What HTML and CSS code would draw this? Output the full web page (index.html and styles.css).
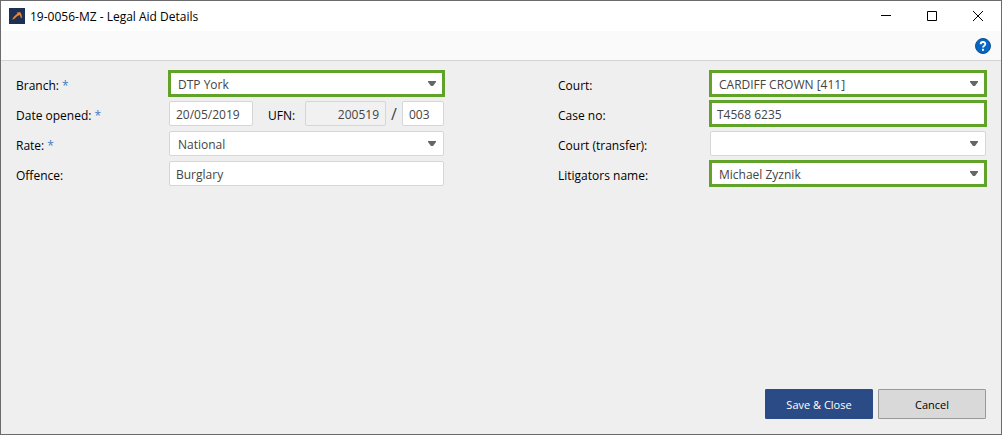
FILE: index.html
```html
<!DOCTYPE html>
<html lang="en">
<head>
<meta charset="utf-8">
<title>19-0056-MZ - Legal Aid Details</title>
<link rel="stylesheet" href="styles.css">
</head>
<body>
<div class="window">
  <header class="titlebar">
    <svg class="app-icon" viewBox="0 0 16 16" aria-hidden="true">
      <rect width="16" height="16" fill="#1d3156"/>
      <path d="M3 11.800L5 8.500L8.500 5.500L7.500 4.800L11 4L12.300 6L13 9.500L12 10.200L10.800 7L8 8.200L5.500 10.800Z" fill="#ee8433"/>
    </svg>
    <h1 class="title">19-0056-MZ - Legal Aid Details</h1>
    <div class="window-controls">
      <button class="window-button" type="button" aria-label="Minimize"><svg viewBox="0 0 12 12"><path d="M1 5.500H11"/></svg></button>
      <button class="window-button" type="button" aria-label="Maximize"><svg viewBox="0 0 12 12"><path d="M1.500 1.500H10.500V10.500H1.500Z"/></svg></button>
      <button class="window-button" type="button" aria-label="Close"><svg viewBox="0 0 12 12"><path d="M1 1L11 11M11 1L1 11"/></svg></button>
    </div>
  </header>
  <div class="toolbar">
    <button class="help" type="button" aria-label="Help">
      <svg viewBox="0 0 16 16">
        <circle cx="8" cy="8" r="7.500" fill="#0566c6" stroke="#174f87"/>
        <path d="M5.700 6.200C5.700 3.300 10.300 3.300 10.300 6C10.300 7.700 8 7.600 8 9.600" fill="none" stroke="#fff" stroke-width="1.900"/>
        <rect x="7" y="10.800" width="2" height="2" fill="#fff"/>
      </svg>
    </button>
  </div>
  <form class="form">
    <div class="fields">
      <div class="column">
        <div class="row">
          <label class="label" for="branch">Branch: <span class="required">*</span></label>
          <div class="select highlight">
            <select id="branch" class="control"><option>DTP York</option></select>
            <svg class="arrow" viewBox="0 0 8 5"><path d="M0 0H8V1L5 5H3L0 1Z"/></svg>
          </div>
        </div>
        <div class="row">
          <label class="label" for="opened">Date opened: <span class="required">*</span></label>
          <div class="group">
            <input id="opened" class="control date" type="text" value="20/05/2019">
            <label class="ufn-label" for="ufn">UFN:</label>
            <input id="ufn" class="control ufn" type="text" value="200519" readonly>
            <span class="slash">/</span>
            <input class="control suffix" type="text" value="003" aria-label="UFN suffix">
          </div>
        </div>
        <div class="row">
          <label class="label" for="rate">Rate: <span class="required">*</span></label>
          <div class="select">
            <select id="rate" class="control"><option>National</option></select>
            <svg class="arrow" viewBox="0 0 8 5"><path d="M0 0H8V1L5 5H3L0 1Z"/></svg>
          </div>
        </div>
        <div class="row">
          <label class="label" for="offence">Offence:</label>
          <input id="offence" class="control" type="text" value="Burglary">
        </div>
      </div>
      <div class="column">
        <div class="row">
          <label class="label" for="court">Court:</label>
          <div class="select highlight">
            <select id="court" class="control"><option>CARDIFF CROWN [411]</option></select>
            <svg class="arrow" viewBox="0 0 8 5"><path d="M0 0H8V1L5 5H3L0 1Z"/></svg>
          </div>
        </div>
        <div class="row">
          <label class="label" for="case">Case no:</label>
          <input id="case" class="control highlight" type="text" value="T4568 6235">
        </div>
        <div class="row">
          <label class="label" for="transfer">Court (transfer):</label>
          <div class="select">
            <select id="transfer" class="control"><option></option></select>
            <svg class="arrow" viewBox="0 0 8 5"><path d="M0 0H8V1L5 5H3L0 1Z"/></svg>
          </div>
        </div>
        <div class="row">
          <label class="label" for="litigator">Litigators name:</label>
          <div class="select highlight">
            <select id="litigator" class="control"><option>Michael Zyznik</option></select>
            <svg class="arrow" viewBox="0 0 8 5"><path d="M0 0H8V1L5 5H3L0 1Z"/></svg>
          </div>
        </div>
      </div>
    </div>
    <footer class="actions">
      <button class="button primary" type="submit">Save &amp; Close</button>
      <button class="button" type="button">Cancel</button>
    </footer>
  </form>
</div>
</body>
</html>
```
FILE: styles.css
```css
* {
  box-sizing: border-box;
}

body {
  margin: 0;
  font-family: "Open Sans", "Noto Sans", sans-serif;
  font-size: 12px;
  color: #000;
}

button,
input,
select {
  font: inherit;
}

.window {
  display: flex;
  flex-direction: column;
  min-height: 100vh;
  border: 1px solid #6b6b6d;
  background: #efefef;
}

.titlebar {
  display: flex;
  align-items: center;
  height: 30px;
  padding-left: 8px;
  background: #fff;
}

.app-icon {
  width: 16px;
  height: 16px;
}

.title {
  flex: 1;
  margin: 0 0 0 5px;
  font-size: 12px;
  font-weight: 400;
}

.window-controls {
  display: flex;
}

.window-button {
  display: flex;
  align-items: center;
  justify-content: center;
  width: 46px;
  height: 28px;
  padding: 0;
  border: 0;
  background: none;
}

.window-button svg {
  width: 12px;
  height: 12px;
  fill: none;
  stroke: #000;
}

.toolbar {
  display: flex;
  align-items: center;
  justify-content: flex-end;
  height: 30px;
  padding-right: 10px;
  border-bottom: 1px solid #d5d5d5;
  background: #fafafa;
}

.help {
  display: flex;
  padding: 0;
  border: 0;
  background: none;
}

.help svg {
  width: 16px;
  height: 16px;
}

.form {
  display: flex;
  flex: 1;
  flex-direction: column;
  justify-content: space-between;
  padding: 10px 15px 15px;
}

.fields {
  display: grid;
  grid-template-columns: 1fr 1fr;
  gap: 114px;
}

.column {
  display: flex;
  flex-direction: column;
  gap: 5px;
}

.row {
  display: grid;
  grid-template-columns: 153px 1fr;
  align-items: center;
  height: 25px;
}

.column + .column .row {
  grid-template-columns: 152px 1fr;
}

.label,
.ufn-label {
  padding-top: 3px;
}

.required {
  color: #3d7dc4;
}

.control {
  width: 100%;
  min-width: 0;
  height: 25px;
  padding: 2px 6px 0;
  border: 1px solid #d6d6d6;
  border-radius: 2px;
  background: #fff;
  color: #444;
}

.select {
  position: relative;
}

.select .control {
  padding: 2px 20px 0 8px;
  appearance: none;
}

.arrow {
  position: absolute;
  top: 10px;
  right: 8px;
  width: 8px;
  height: 5px;
  fill: #666;
  pointer-events: none;
}

.highlight {
  border-radius: 0;
  outline: 3px solid #61a229;
  outline-offset: -2px;
}

.group {
  display: flex;
  align-items: center;
}

.group .date {
  flex: none;
  width: 84px;
}

.ufn-label {
  margin: 0 10px 0 15px;
}

.group .ufn {
  flex: 1;
  background: #f1f1f1;
  text-align: right;
}

.slash {
  width: 16px;
  font-size: 16px;
  text-align: center;
  color: #444;
}

.group .suffix {
  flex: none;
  width: 42px;
}

.actions {
  display: flex;
  justify-content: flex-end;
  gap: 5px;
}

.button {
  width: 108px;
  height: 30px;
  padding: 0;
  border: 1px solid #999;
  border-radius: 1px;
  background: #d9d9d9;
  color: #000;
  font-size: 11px;
}

.primary {
  border-color: #2a4b85;
  background: #2a4b85;
  color: #fff;
}
```
